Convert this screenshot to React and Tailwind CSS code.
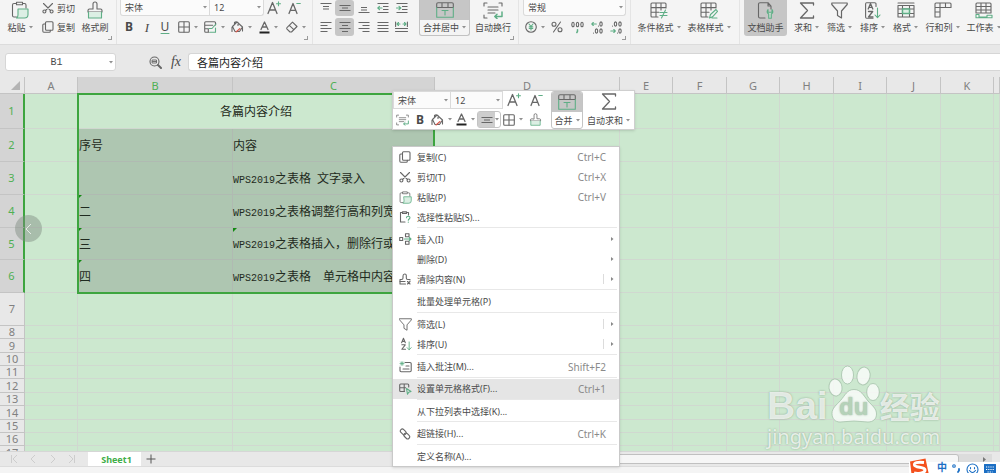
import { useState } from 'react';
import clsx from 'clsx';

const DARK = '#676767';
const GREEN = '#5fae86';

const Svg = ({ w = 16, h = 16, box, children }) => (
  <svg
    width={w}
    height={h}
    viewBox={box || `0 0 ${w} ${h}`}
    fill="none"
    stroke={DARK}
    strokeWidth="1.1"
    strokeLinecap="round"
    strokeLinejoin="round"
    className="shrink-0"
    aria-hidden="true"
  >
    {children}
  </svg>
);

const Caret = () => (
  <svg width="4" height="3" viewBox="0 0 4 3" className="shrink-0" aria-hidden="true">
    <path d="M0 0h4L2 2.6z" fill="#909090" />
  </svg>
);

/* ---------- icons ---------- */

const PasteIcon = ({ size = 18 }) => (
  <Svg w={size} h={size} box="0 0 18 18">
    <path d="M5 2.500H3q-1.500 0-1.500 1.500v10.500q0 1.500 1.500 1.500h2.500M12 2.500h1.500q1.500 0 1.500 1.500v3M5.500 1.200h6v2.600h-6z" />
    <path d="M7 8h10v5.500q0 3.500-3.500 3.500H5.500Q7 16 7 14z" fill="#dcefe4" stroke={GREEN} />
  </Svg>
);

const PasteSpecialIcon = () => (
  <Svg w={12} h={12}>
    <path d="M3 1.500H1.500v9.500H6M8 1.500h1.500V4M3.500.8h4v1.600h-4z" />
    <path d="M7.500 6.800c0-2 3.500-2 3.500 0 0 1.200-1.700 1.200-1.700 2.500M9.300 11v.2" stroke={GREEN} />
  </Svg>
);

const CutIcon = ({ size = 12 }) => (
  <Svg w={size} h={size} box="0 0 12 12">
    <path d="M1.500 1.500l7 7M10.500 1.500l-7 7" />
    <circle cx="2.400" cy="9.500" r="1.500" />
    <circle cx="9.600" cy="9.500" r="1.500" />
  </Svg>
);

const CopyIcon = ({ size = 12 }) => (
  <Svg w={size} h={size} box="0 0 12 12">
    <rect x="3.500" y=".7" width="7.500" height="8.500" rx="1" />
    <path d="M3.500 3H1.800q-1 0-1 1v6q0 1.200 1 1.200h5.500q1 0 1-1V9.200" />
  </Svg>
);

const BrushIcon = ({ w = 18, h = 18 }) => (
  <Svg w={w} h={h} box="0 0 18 18">
    <path d="M7 8V3q0-2 2-2t2 2v5h3.500q1.500 0 1.500 1.500V11H2V9.500Q2 8 3.500 8z" />
    <path d="M2.500 11v6h13v-6" fill="#dcefe4" stroke={GREEN} />
  </Svg>
);

const BordersIcon = () => (
  <Svg w={12} h={12}>
    <rect x=".7" y=".7" width="10.600" height="10.600" rx="1" />
    <path d="M6 1v10M1 6h10" />
  </Svg>
);

const CellStyleIcon = () => (
  <Svg w={13} h={12}>
    <path d="M11.500 4V1.700q0-1-1-1H1.700q-1 0-1 1v8.600q0 1 1 1H5M.7 4.200h8M.7 7.800H4M4.300 7.800V11" />
    <path d="M5 7.500h3l4-4.500M6 11.300h5.500V7" stroke={GREEN} />
  </Svg>
);

const BucketIcon = () => (
  <Svg w={13} h={12}>
    <path d="M6 1L1.500 5.500 4 10.500h4.500L11.500 6zM3.500 3.500V1.500Q5 0 7 1.500v3M1 10.500V6M11.500 6v4" />
    <path d="M5 11l4-3.500" stroke="#d9594c" />
  </Svg>
);

const EraserIcon = () => (
  <Svg w={12} h={12}>
    <path d="M6.500 1.200L11 5.500 5.500 11H4L.8 7.800q-.3-.8.400-1.500zM3.300 4.300l4.500 4.400" />
  </Svg>
);

const FontColorIcon = () => (
  <Svg w={11} h={13}>
    <path d="M2 8.500L5.500 1 9 8.500M3.300 6h4.400" strokeWidth="1.300" />
    <path d="M.5 11.500h10" stroke="#222" strokeWidth="2" strokeLinecap="butt" />
  </Svg>
);

const GrowFontIcon = () => (
  <Svg w={14} h={14}>
    <path d="M1 12.500L5.500 1.500 10 12.500M2.500 9h6" strokeWidth="1.300" />
    <path d="M9.500 2.800h4M11.500.8v4" stroke={GREEN} />
  </Svg>
);

const ShrinkFontIcon = () => (
  <Svg w={13} h={14}>
    <path d="M1 12.500L5 2.500l4 10M2.300 9.300h5.400" strokeWidth="1.300" />
    <path d="M8.800 2.500h3.500" stroke={GREEN} />
  </Svg>
);

const LinesIcon = ({ d }) => (
  <Svg w={12} h={12}>
    <path d={d} strokeLinecap="butt" />
  </Svg>
);

const IndentIcon = ({ right }) => (
  <Svg w={12} h={12}>
    <path d="M.5 1.500h11M6 4.500h5.500M6 7.500h5.500M.5 10.500h11" strokeLinecap="butt" />
    <path d={right ? 'M.5 6h4M3 4.300L4.800 6 3 7.700' : 'M1 6h4M2.500 4.300L.8 6l1.700 1.700'} stroke={GREEN} />
  </Svg>
);

const DistributeIcon = () => (
  <Svg w={13} h={12}>
    <path d="M.6 1v4.500M12.400 1v4.500M.5 7.500h12M.5 10.500h12" />
    <path d="M2 3h3M8 3h3M3.500 1.500L2 3l1.500 1.500M9.500 1.500L11 3 9.500 4.500" stroke={GREEN} />
  </Svg>
);

const MergeIcon = () => (
  <Svg w={18} h={16}>
    <path d="M.7 5.500V2q0-1.300 1.300-1.300h14q1.300 0 1.300 1.300v3.500zM6 1v4.500M12 1v4.500" />
    <path d="M.7 5.500v9.800h16.600V5.500M6 8.500h6M9 8.500v4.500" stroke={GREEN} />
  </Svg>
);

const WrapIcon = ({ w = 20, h = 17 }) => (
  <Svg w={w} h={h} box="0 0 20 17">
    <path d="M1 4V1h3M16 1h3v3M1 13v3h3M5 5h10M5 8h10M5 11h7" />
    <path d="M19 10v4.500h-7M14 12.300l-2.200 2.200L14 16.600" stroke={GREEN} strokeWidth="1.500" />
  </Svg>
);

const YuanIcon = () => (
  <Svg w={12} h={12}>
    <circle cx="6" cy="6" r="5.300" />
    <path d="M4 3l2 2.500L8 3M6 5.500V9M4.200 5.900h3.600M4.200 7.500h3.600" stroke={GREEN} />
  </Svg>
);

const PercentIcon = () => (
  <Svg w={12} h={12}>
    <circle cx="3" cy="3.300" r="2" />
    <circle cx="9" cy="8.800" r="2" />
    <path d="M9.500 1l-7 10" />
  </Svg>
);

const ThousandIcon = () => (
  <Svg w={13} h={13}>
    <ellipse cx="2" cy="3.500" rx="1.200" ry="2.300" />
    <ellipse cx="6.500" cy="3.500" rx="1.200" ry="2.300" />
    <ellipse cx="11" cy="3.500" rx="1.200" ry="2.300" />
    <path d="M6.500 8.800v1.500l-.7 1.200" stroke={GREEN} strokeWidth="1.500" />
  </Svg>
);

const DecimalIcon = ({ less }) => (
  <Svg w={12} h={13}>
    <ellipse cx="10" cy="3" rx="1.200" ry="2.100" />
    <ellipse cx="10" cy="10" rx="1.200" ry="2.100" />
    {less ? <ellipse cx="5.500" cy="3" rx="1.200" ry="2.100" /> : <ellipse cx="5.500" cy="10" rx="1.200" ry="2.100" />}
    <path d={less ? 'M2.500 5v.1M7.500 12v.1' : 'M7.500 5v.1M2.500 12v.1'} />
    <path
      d={less ? 'M.8 10h4.500M3.800 8.500L5.300 10l-1.500 1.500' : 'M.8 3h4.500M2.300 1.500L.8 3l1.500 1.500'}
      stroke={GREEN}
    />
  </Svg>
);

const GridIcon = ({ kind }) => (
  <Svg w={18} h={17}>
    <path d="M16 6V2q0-1-1-1H2Q1 1 1 2v12q0 1 1 1h6M1 5.600h15M1 10.200h8M6 1v14M11 1v7" />
    {kind === 'rule' ? (
      <path d="M10 10.500h7M10 13.500h7M15.500 8l-4 8" stroke={GREEN} />
    ) : (
      <path d="M9.500 16l1-3.500L16 7.500l1.500 1.800-5 5.500zM12 16h5" stroke={GREEN} />
    )}
  </Svg>
);

const AssistantIcon = () => (
  <Svg w={18} h={17}>
    <path d="M8 16H3q-1.500 0-1.500-1.500V2Q1.500.7 3 .7h8L14 4v3M11 1v3h3" />
    <path
      d="M11 7.500q-2 3 .7 4.500v4.300h2.600V12q2.700-1.500.7-4.500v2.700h-4z"
      stroke={GREEN}
      fill="#c6dccf"
    />
  </Svg>
);

const SumIcon = () => (
  <Svg w={16} h={17}>
    <path d="M14.500 3V1H1.500l7 7.500-7 7.500h13v-2" strokeWidth="1.300" />
  </Svg>
);

const FilterIcon = ({ w = 17, h = 17 }) => (
  <Svg w={w} h={h} box="0 0 17 17">
    <path d="M.8 1h15.400v1.500L10.500 9v7l-4-2.500V9L.8 2.500z" strokeWidth="1.200" />
  </Svg>
);

const SortIcon = ({ boxed, w = 16, h = 17 }) => (
  <Svg w={w} h={h} box="0 0 16 17">
    {boxed && <path d="M11 4.500V2q0-1.200-1.200-1.200H1.500Q.6.800.6 2v13q0 1.200 1 1.200H8" />}
    <path d="M3.200 7L5.500 1.500 7.800 7M4 5.300h3M3.500 9.500h4.200L3.500 15h4.500" strokeWidth="1.300" />
    <path d="M12.500 6v9.500M10 13l2.500 2.700L15 13" stroke={GREEN} />
  </Svg>
);

const FormatIcon = () => (
  <Svg w={18} h={16}>
    <path d="M1 1h16M1 3.500h16V15H1zM1 7h16M1 11.500h16M5.500 3.500V15M12.500 3.500V15" />
    <path d="M5.500 7h7v4.500h-7z" fill="#dcefe4" stroke={GREEN} strokeWidth="1.500" />
  </Svg>
);

const RowColIcon = () => (
  <Svg w={18} h={16}>
    <path d="M1 2q0-1 1-1h14q1 0 1 1v3.500H6V15H1zM1 5.500h5V1M11.500 1v4.500M1 10h5" />
  </Svg>
);

const WorksheetIcon = () => (
  <Svg w={18} h={17}>
    <path d="M1 11V2q0-1 1-1h13q1 0 1 1v9zM1 4.500h15M1 8h15M6 1v10M11 1v10" />
    <path d="M1 12.500v3.300h16v-2.600h-5V15H4v-2.500z" stroke={GREEN} />
  </Svg>
);

const InsertIcon = () => (
  <Svg w={13} h={12}>
    <path d="M.7 4.500h3v3h-3zM6.500.7h3.500v3H6.500zM6.500 8.300H10v3H6.500z" />
    <path d="M5.500 6h6.500M10.300 4.500L12 6l-1.700 1.500" stroke={GREEN} />
  </Svg>
);

const ClearIcon = () => (
  <Svg w={12} h={12}>
    <path d="M6.500 11H1V6.500h1.500q1.500 0 1.500-1.500V3q0-2 1.700-2t1.600 2v2q0 1.500 1.500 1.500H11V7" />
    <path d="M8.500 8.500L11 11M11 8.500L8.500 11M1 8.500h5" />
  </Svg>
);

const CommentIcon = () => (
  <Svg w={13} h={12}>
    <path d="M6 1.500h5q1.200 0 1.200 1V9.500q0 1.200-1.200 1.200H2.200Q1 10.700 1 9.500V6M4 8h6M7 5h3" />
    <path d="M1 2.500h4M3 .6v4M1.600 1l2.800 3M4.400 1L1.600 4" stroke={GREEN} strokeWidth=".8" />
  </Svg>
);

const CellFormatIcon = () => (
  <Svg w={13} h={12}>
    <path d="M5.500 8.500H1.700q-1 0-1-1V2q0-1 1-1h7q1 0 1 1v2M.7 4.700h6M5.200 1v7.500" />
    <path d="M7.500 5.500l4.500 3-2.300.7-1.200 2z" stroke={GREEN} />
  </Svg>
);

const LinkIcon = () => (
  <Svg w={12} h={12}>
    <rect x="1" y="1.800" width="6.500" height="4" rx="2" transform="rotate(45 4.200 3.800)" />
    <rect x="4.500" y="6" width="6.500" height="4" rx="2" transform="rotate(45 7.800 8)" />
  </Svg>
);

const TOP = 'M.5 1.500h11M3 4.500h6M3 7h6';
const MIDDLE = 'M.5 3.500h11M3 6h6M.5 8.500h11';
const BOTTOM = 'M3 5.500h6M3 8h6M.5 10.500h11';
const LEFT = 'M.5 1.500h11M.5 4.500h7M.5 7.500h11M.5 10.500h7';
const CENTER = 'M.5 1.500h11M3 4.500h6M.5 7.500h11M3 10.500h6';
const RIGHT = 'M.5 1.500h11M4.500 4.500h7M.5 7.500h11M4.500 10.500h7';
const JUSTIFY = 'M.5 1.500h11M.5 4.500h11M.5 7.500h11M.5 10.500h11';

/* ---------- ribbon ---------- */

const Group = ({ className, launcher, children }) => (
  <section className={clsx('relative flex shrink-0 border-r border-[#e4e4e4]', className)}>
    {children}
    {launcher && (
      <button aria-label="更多设置" className="absolute right-1 bottom-1 size-1 border-r border-b border-[#9a9a9a]" />
    )}
  </section>
);

const BigButton = ({ icon, label, caret, active, className }) => (
  <button
    className={clsx('flex h-9 shrink-0 flex-col items-center', active && 'rounded-b-[3px] bg-[#c6c6c6]', className)}
  >
    <span className="flex h-5 items-center">{icon}</span>
    <span className="flex h-[14px] items-center gap-[3px] whitespace-nowrap">
      {label}
      {caret && <Caret />}
    </span>
  </button>
);

const Tool = ({ label, active, caret, className, children }) => (
  <button
    aria-label={label}
    className={clsx(
      'flex h-full shrink-0 items-center justify-center',
      active && 'rounded-[3px] bg-[#c6c6c6]',
      caret && 'gap-1',
      className
    )}
  >
    {children}
    {caret && <Caret />}
  </button>
);

const Picker = ({ label, value, className }) => (
  <label className={clsx('relative flex shrink-0 items-center border border-[#dadada] bg-[#fbfbfb]', className)}>
    <select aria-label={label} defaultValue={value} className="h-full w-full appearance-none pl-1 outline-none">
      <option>{value}</option>
    </select>
    <span className="pointer-events-none absolute right-0.5 flex">
      <Caret />
    </span>
  </label>
);

const Ribbon = () => (
  <header className="flex h-[45px] shrink-0 overflow-hidden border-b border-[#dcdcdc] bg-[#f4f4f4]">
    <Group launcher className="w-[117px] pl-1">
      <BigButton className="w-8" icon={<PasteIcon />} label="粘贴" caret />
      <div className="ml-1.5 flex w-9 flex-col gap-0.5">
        <button className="flex h-4 items-center gap-[3px]">
          <CutIcon />
          剪切
        </button>
        <button className="flex h-[18px] items-center gap-[3px]">
          <CopyIcon />
          复制
        </button>
      </div>
      <BigButton className="w-[34px]" icon={<BrushIcon />} label="格式刷" />
    </Group>

    <Group launcher className="w-[196px] flex-col gap-0.5 pl-[3px]">
      <div className="flex h-4">
        <Picker label="字体" value="宋体" className="w-[90px] rounded-bl-[3px] border-t-0" />
        <Picker label="字号" value="12" className="w-[54px] rounded-br-[3px] border-t-0 border-l-0" />
        <Tool label="增大字号" className="w-5">
          <GrowFontIcon />
        </Tool>
        <Tool label="减小字号" className="w-5">
          <ShrinkFontIcon />
        </Tool>
      </div>
      <div className="flex h-[18px]">
        <Tool className="w-[18px] text-[12px] font-bold">B</Tool>
        <Tool className="w-[18px] font-['Liberation_Serif',serif] text-[13px] italic">I</Tool>
        <Tool className="w-[18px] text-[12px] underline decoration-[#5fae86] underline-offset-2">U</Tool>
        <Tool label="边框" caret className="w-[27px]">
          <BordersIcon />
        </Tool>
        <Tool label="单元格样式" caret className="w-[27px]">
          <CellStyleIcon />
        </Tool>
        <Tool label="填充颜色" caret className="w-[27px]">
          <BucketIcon />
        </Tool>
        <Tool label="字体颜色" caret className="w-[27px]">
          <FontColorIcon />
        </Tool>
        <Tool label="清除" caret className="w-[27px]">
          <EraserIcon />
        </Tool>
      </div>
    </Group>

    <Group launcher className="w-[206px] pl-[3px]">
      <div className="flex flex-col gap-0.5">
        <div className="flex h-4">
          <Tool label="顶端对齐" className="w-[19px]">
            <LinesIcon d={TOP} />
          </Tool>
          <Tool label="垂直居中" active className="w-[19px]">
            <LinesIcon d={MIDDLE} />
          </Tool>
          <Tool label="底端对齐" className="w-[19px]">
            <LinesIcon d={BOTTOM} />
          </Tool>
          <Tool label="减少缩进" className="w-[19px]">
            <IndentIcon />
          </Tool>
          <Tool label="增加缩进" className="w-[19px]">
            <IndentIcon right />
          </Tool>
        </div>
        <div className="flex h-[18px]">
          <Tool label="左对齐" className="w-[19px]">
            <LinesIcon d={LEFT} />
          </Tool>
          <Tool label="水平居中" active className="w-[19px]">
            <LinesIcon d={CENTER} />
          </Tool>
          <Tool label="右对齐" className="w-[19px]">
            <LinesIcon d={RIGHT} />
          </Tool>
          <Tool label="两端对齐" className="w-[19px]">
            <LinesIcon d={JUSTIFY} />
          </Tool>
          <Tool label="分散对齐" className="w-[19px]">
            <DistributeIcon />
          </Tool>
        </div>
      </div>
      <button className="ml-2 flex h-9 w-[51px] flex-col overflow-hidden rounded-b-[3px] border border-t-0 border-[#c2c2c2]">
        <span className="flex h-5 w-full items-center justify-center bg-[#c6c6c6]">
          <MergeIcon />
        </span>
        <span className="flex h-[14px] w-full items-center justify-center gap-[3px] whitespace-nowrap">
          合并居中
          <Caret />
        </span>
      </button>
      <BigButton className="w-[46px]" icon={<WrapIcon />} label="自动换行" />
    </Group>

    <Group launcher className="w-28 flex-col gap-0.5 pl-1">
      <div className="flex h-4">
        <Picker label="数字格式" value="常规" className="w-[103px] rounded-b-[3px] border-t-0" />
      </div>
      <div className="flex h-[18px]">
        <Tool label="货币" caret className="w-6">
          <YuanIcon />
        </Tool>
        <Tool label="百分比" className="w-5">
          <PercentIcon />
        </Tool>
        <Tool label="千位分隔" className="w-5">
          <ThousandIcon />
        </Tool>
        <Tool label="增加小数位" className="w-[19px]">
          <DecimalIcon />
        </Tool>
        <Tool label="减少小数位" className="w-[19px]">
          <DecimalIcon less />
        </Tool>
      </div>
    </Group>

    <Group className="w-[109px] pl-[3px]">
      <BigButton className="w-[50px]" icon={<GridIcon kind="rule" />} label="条件格式" caret />
      <BigButton className="w-[50px]" icon={<GridIcon kind="style" />} label="表格样式" caret />
    </Group>

    <Group className="border-r-0 pl-1">
      <BigButton className="w-[43px]" icon={<AssistantIcon />} label="文档助手" active />
      <BigButton className="ml-[3px] w-[33px]" icon={<SumIcon />} label="求和" caret />
      <BigButton className="w-[33px]" icon={<FilterIcon />} label="筛选" caret />
      <BigButton className="w-[33px]" icon={<SortIcon boxed />} label="排序" caret />
      <BigButton className="w-[33px]" icon={<FormatIcon />} label="格式" caret />
      <BigButton className="w-[41px]" icon={<RowColIcon />} label="行和列" caret />
      <BigButton className="w-[41px]" icon={<WorksheetIcon />} label="工作表" caret />
    </Group>
  </header>
);

const FormulaBar = () => (
  <div className="flex shrink-0 items-center bg-[#e8e8e8] pt-2 pb-1.5 pl-[5px]">
    <label className="relative flex h-[18px] w-[111px] items-center rounded-[3px] border border-[#d6d6d6] bg-white">
      <input
        aria-label="名称框"
        defaultValue="B1"
        className="w-full bg-transparent pr-2 text-center font-['Liberation_Mono',monospace] text-[10px] outline-none"
      />
      <span className="pointer-events-none absolute right-0.5 flex">
        <Caret />
      </span>
    </label>
    <button aria-label="浏览公式结果" className="ml-[33px]">
      <Svg w={13} h={13}>
        <circle cx="5.500" cy="5.500" r="4.500" />
        <path d="M3.500 4h4v3h-4zM3.500 5.500h4" strokeWidth=".9" />
        <path d="M9 9l3 3" strokeWidth="2" />
      </Svg>
    </button>
    <button className="ml-[6px] w-4 font-['Liberation_Serif',serif] text-[14px] leading-none italic">fx</button>
    <input
      aria-label="编辑栏"
      defaultValue="各篇内容介绍"
      className="ml-1 h-[18px] min-w-0 flex-1 rounded-l-[3px] border border-r-0 border-[#d6d6d6] bg-white pl-2 text-[11px] text-[#222] outline-none"
    />
  </div>
);

/* ---------- sheet ---------- */

const columns = [
  { name: 'A', width: 'w-[53px]' },
  { name: 'B', width: 'w-[155px]', selected: true },
  { name: 'C', width: 'w-[202px]', selected: true },
  { name: 'D', width: 'w-[185px]' },
  { name: 'E', width: 'w-[53px]' },
  { name: 'F', width: 'w-[54px]' },
  { name: 'G', width: 'w-[53px]' },
  { name: 'H', width: 'w-[54px]' },
  { name: 'I', width: 'w-[53px]' },
  { name: 'J', width: 'w-[54px]' },
  { name: 'K', width: 'w-[53px]' },
  { name: '', width: 'w-auto' },
];

const rows = [
  { height: 'h-[35px]', title: '各篇内容介绍' },
  { height: 'h-[33px]', b: '序号', c: '内容' },
  { height: 'h-[33px]', b: '', code: 'WPS2019', c: '之表格', rest: '文字录入', gap: 'ml-1.5' },
  { height: 'h-[33px]', b: '二', code: 'WPS2019', c: '之表格调整行高和列宽', flagB: true },
  { height: 'h-[32px]', b: '三', code: 'WPS2019', c: '之表格插入，删除行或', flagB: true, flagC: true },
  { height: 'h-[33px]', b: '四', code: 'WPS2019', c: '之表格', rest: '单元格中内容', gap: 'ml-3', flagB: true },
  { height: 'h-[33px]' },
  { height: 'h-[13px]' },
  { height: 'h-[14px]' },
  { height: 'h-[13px]' },
  { height: 'h-[13px]' },
  { height: 'h-[14px]' },
  { height: 'h-[13px]' },
  { height: 'h-[14px]' },
  { height: 'h-[13px]' },
  { height: 'h-[13px]' },
  { height: 'h-[14px]' },
];

const CELL = 'border-r border-b border-[#d0d8d0] p-0';
const SELECTED = 'relative border-r border-b border-[#b0bab2] bg-[#aec6b1] px-0 pt-0.5 pb-0 whitespace-nowrap';

const ErrorFlag = () => (
  <span className="absolute top-0 left-0 size-0 border-t-4 border-r-4 border-t-[#128a12] border-r-transparent" />
);

const Sheet = () => (
  <main className="relative min-h-0 flex-1 overflow-hidden bg-[#cce8cf]">
    <table className="w-full table-fixed border-separate border-spacing-0 text-[12px] leading-none text-[#1f2a20]">
      <colgroup>
        <col className="w-[25px]" />
        {columns.map((col) => (
          <col key={col.name} className={col.width} />
        ))}
      </colgroup>
      <thead className="font-['Noto_Sans',sans-serif] text-[11px] text-[#808080]">
        <tr className="h-[17px]">
          <th className="border-r border-b border-[#c4c4c4] bg-[#e8e8e8] p-0">
            <svg width="9" height="9" viewBox="0 0 9 9" className="ml-auto mr-1" aria-hidden="true">
              <path d="M9 0v9H0z" fill="#b4b4b4" />
            </svg>
          </th>
          {columns.map((col) => (
            <th
              key={col.name}
              className={clsx(
                'border-r border-b border-[#c4c4c4] p-0 font-normal',
                col.selected ? 'bg-[#d4d4d4] text-[#4fb053]' : 'bg-[#e8e8e8]'
              )}
            >
              {col.name}
            </th>
          ))}
        </tr>
      </thead>
      <tbody>
        {rows.map((row, i) => {
          const selected = i < 6;
          return (
            <tr key={i} className={row.height}>
              <th
                className={clsx(
                  "border-b p-0 font-['Noto_Sans',sans-serif] text-[11px] leading-[12px] font-normal",
                  selected
                    ? 'border-r-2 border-r-[#3da53f] border-b-[#c4c4c4] bg-[#d4d4d4] text-[#4fb053]'
                    : 'border-r border-[#c4c4c4] bg-[#e8e8e8] text-[#808080]'
                )}
              >
                {i + 1}
              </th>
              <td className={CELL} />
              {row.title && (
                <td colSpan={2} className="border-r border-b border-[#d0d8d0] px-0 pt-0.5 pb-0 text-center">
                  {row.title}
                </td>
              )}
              {selected && !row.title && (
                <>
                  <td className={clsx(SELECTED, 'pl-px')}>
                    {row.flagB && <ErrorFlag />}
                    {row.b}
                  </td>
                  <td className={SELECTED}>
                    {row.flagC && <ErrorFlag />}
                    <span className="font-['Liberation_Mono',monospace] text-[10px]">{row.code}</span>
                    {row.c}
                    {row.rest && <span className={row.gap}>{row.rest}</span>}
                  </td>
                </>
              )}
              {!selected && (
                <>
                  <td className={CELL} />
                  <td className={CELL} />
                </>
              )}
              {columns.slice(3).map((col) => (
                <td key={col.name} className={CELL} />
              ))}
            </tr>
          );
        })}
      </tbody>
    </table>

    {/* Selection frame over B1:C6 */}
    <div className="pointer-events-none absolute top-4 left-[77px] h-[201px] w-[358px] border-2 border-[#3da53f]" />

    <button
      aria-label="上一页"
      className="absolute top-[138px] left-[15px] flex size-[27px] items-center justify-center rounded-full bg-[#7d8a7f]/45"
    >
      <svg width="7" height="12" viewBox="0 0 7 12" fill="none" stroke="#e6ece6" aria-hidden="true">
        <path d="M6 1L1 6l5 5" />
      </svg>
    </button>
  </main>
);

const SheetTabs = () => (
  <nav className="flex h-[15px] shrink-0 items-stretch border-t border-[#d6d6d6] bg-[#e8e8e8]">
    <div className="flex w-[88px] items-center justify-around pr-1.5 pl-1">
      {['M1.500 1v8M7 1L3 5l4 4', 'M6 1L2 5l4 4', 'M2 1l4 4-4 4', 'M6.500 1v8M1 1l4 4-4 4'].map((d) => (
        <button key={d} aria-label="切换工作表">
          <svg width="8" height="10" viewBox="0 0 8 10" fill="none" stroke="#cdcdcd" aria-hidden="true">
            <path d={d} />
          </svg>
        </button>
      ))}
    </div>
    <button className="flex w-[53px] items-center justify-center bg-white pl-1 font-['Noto_Sans',sans-serif] text-[9px] leading-none font-bold text-[#3fae49]">
      Sheet1
    </button>
    <button aria-label="新建工作表" className="ml-[5px] flex items-center">
      <svg width="10" height="10" viewBox="0 0 10 10" stroke="#555" aria-hidden="true">
        <path d="M5 .5v9M.5 5h9" />
      </svg>
    </button>
    <div className="my-0.5 mr-2 ml-auto flex w-[58%] items-center justify-end bg-[#dcdcdc]">
      <div className="h-full flex-1 rounded-r-[3px] border border-[#c0c0c0] bg-[#f6f6f6]" />
      <button aria-label="向右滚动" className="flex w-[33px] justify-end pr-1.5">
        <svg width="3" height="5" viewBox="0 0 3 5" aria-hidden="true">
          <path d="M0 0l3 2.500L0 5z" fill="#777" />
        </svg>
      </button>
    </div>
  </nav>
);

/* ---------- floating parts ---------- */

const MiniToolbar = () => (
  <div className="absolute top-[90px] left-[392px] flex h-10 border border-[#cfcfcf] bg-white shadow-sm">
    <div className="flex w-[156px] flex-col">
      <div className="flex h-[18px]">
        <Picker label="字体" value="宋体" className="w-[58px]" />
        <Picker label="字号" value="12" className="w-[52px] border-l-0" />
        <Tool label="增大字号" className="w-[22px]">
          <GrowFontIcon />
        </Tool>
        <Tool label="减小字号" className="w-[22px]">
          <ShrinkFontIcon />
        </Tool>
      </div>
      <div className="mt-0.5 flex h-[17px]">
        <Tool label="自动换行" className="w-[18px]">
          <WrapIcon w={13} h={12} />
        </Tool>
        <Tool className="w-[18px] text-[12px] font-bold">B</Tool>
        <Tool label="填充颜色" caret className="w-6">
          <BucketIcon />
        </Tool>
        <Tool label="字体颜色" caret className="w-6">
          <FontColorIcon />
        </Tool>
        <button aria-label="对齐方式" className="flex w-6 items-center rounded-[3px] border border-[#c4c4c4]">
          <span className="flex h-full w-[17px] items-center justify-center bg-[#cdcdcd]">
            <LinesIcon d={MIDDLE} />
          </span>
          <Caret />
        </button>
        <Tool label="边框" caret className="w-6">
          <BordersIcon />
        </Tool>
        <Tool label="格式刷" className="w-5">
          <BrushIcon w={13} h={13} />
        </Tool>
      </div>
    </div>
    <button className="ml-0.5 flex w-8 flex-col items-center overflow-hidden rounded-[3px] border border-[#c4c4c4]">
      <span className="flex h-5 w-full items-center justify-center bg-[#c6c6c6]">
        <MergeIcon />
      </span>
      <span className="flex flex-1 items-center gap-[3px] whitespace-nowrap">
        合并
        <Caret />
      </span>
    </button>
    <button className="flex w-[51px] flex-col items-center">
      <span className="flex h-[21px] items-center">
        <SumIcon />
      </span>
      <span className="flex flex-1 items-center gap-[3px] whitespace-nowrap">
        自动求和
        <Caret />
      </span>
    </button>
  </div>
);

const menu = [
  { icon: <CopyIcon />, label: '复制(C)', keys: 'Ctrl+C' },
  { icon: <CutIcon />, label: '剪切(T)', keys: 'Ctrl+X' },
  { icon: <PasteIcon size={13} />, label: '粘贴(P)', keys: 'Ctrl+V' },
  { icon: <PasteSpecialIcon />, label: '选择性粘贴(S)...' },
  null,
  { icon: <InsertIcon />, label: '插入(I)', sub: true },
  { label: '删除(D)', sub: true },
  { icon: <ClearIcon />, label: '清除内容(N)', sub: true, split: true },
  null,
  { label: '批量处理单元格(P)' },
  null,
  { icon: <FilterIcon w={13} h={13} />, label: '筛选(L)', sub: true, split: true },
  { icon: <SortIcon w={13} h={14} />, label: '排序(U)', sub: true, split: true },
  null,
  { icon: <CommentIcon />, label: '插入批注(M)...', keys: 'Shift+F2' },
  null,
  { icon: <CellFormatIcon />, label: '设置单元格格式(F)...', keys: 'Ctrl+1' },
  null,
  { label: '从下拉列表中选择(K)...' },
  null,
  { icon: <LinkIcon />, label: '超链接(H)...', keys: 'Ctrl+K' },
  null,
  { label: '定义名称(A)...' },
];

const ContextMenu = () => {
  const [active, setActive] = useState('设置单元格格式(F)...');

  return (
    <div
      role="menu"
      className="absolute top-[146px] bottom-1.5 left-[392px] flex w-[228px] flex-col border border-[#c9c9c9] bg-white shadow-sm"
    >
      {menu.map((item, i) =>
        item ? (
          <button
            key={item.label}
            role="menuitem"
            onMouseEnter={() => setActive(item.label)}
            className={clsx('flex h-5 shrink-0 items-center pr-[5px] text-left', active === item.label && 'bg-[#e5e5e5]')}
          >
            <span className="flex w-6 shrink-0 items-center justify-center">{item.icon}</span>
            <span className="flex-1 whitespace-nowrap">{item.label}</span>
            {item.keys && <span className="pr-2 text-[10px] text-[#8a8a8a]">{item.keys}</span>}
            {item.split && <span className="mr-[7px] h-2.5 border-l border-[#dcdcdc]" />}
            {item.sub && (
              <svg width="3" height="4" viewBox="0 0 3 4" aria-hidden="true">
                <path d="M0 0l2.500 2L0 4z" fill="#888" />
              </svg>
            )}
          </button>
        ) : (
          <div key={i} role="separator" className="mr-0.5 ml-6 flex-1 border-t border-[#e8e8e8]" />
        )
      )}
    </div>
  );
};

const Watermark = () => (
  <div className="pointer-events-none absolute right-14 bottom-[22px] w-[177px] text-white/75 [text-shadow:0_0_2px_rgba(90,125,95,0.6)]">
    <div className="flex h-[57px] items-end leading-none">
      <span className="font-['Liberation_Sans',sans-serif] text-[39px] leading-[34px] font-bold">Bai</span>
      <span className="relative flex w-[52px] shrink-0 justify-center">
        <svg
          width="52"
          height="58"
          viewBox="0 0 52 58"
          fill="#fff"
          fillOpacity=".75"
          stroke="#9dbba2"
          strokeOpacity=".7"
          aria-hidden="true"
        >
          <ellipse cx="7.500" cy="22.500" rx="6.500" ry="8.500" transform="rotate(-8 7.500 22.500)" />
          <ellipse cx="19.500" cy="10" rx="6" ry="9" />
          <ellipse cx="35.500" cy="11" rx="6.500" ry="9" transform="rotate(10 35.500 11)" />
          <ellipse cx="45" cy="27" rx="6.300" ry="8.500" />
          <path d="M26 24.500c7 0 9.500 6 14 11.500 4 4.500 8.500 7.500 8.500 13 0 5-3.500 8-8.500 8-5 0-9-1-14-1s-9 1-14 1c-5 0-8-3.500-8-8.500 0-5.500 4.500-8.500 8.500-13C17 30.500 19 24.500 26 24.500z" />
        </svg>
        <span className="absolute bottom-1 font-['Liberation_Sans',sans-serif] text-[24px] leading-[24px] font-bold text-[#b5d2b9]">
          du
        </span>
      </span>
      <span className="text-[30px] leading-[32px] font-bold whitespace-nowrap">经验</span>
    </div>
    <div className="font-['Noto_Sans',sans-serif] text-[20px] leading-[28px] whitespace-nowrap">jingyan.baidu.com</div>
  </div>
);

const InputMethodBar = () => (
  <div className="absolute right-0 bottom-0 flex h-[11px] items-start gap-[5px] bg-white pr-1 pl-7 text-[#1c6fc4]">
    <span className="absolute bottom-0 left-0 flex h-[15px] w-5 overflow-hidden">
      <svg width="21" height="20" viewBox="0 0 21 20" className="shrink-0" aria-hidden="true">
        <path d="M1 3.500L16.500.5 20 17 3 20z" fill="#f4511e" />
        <path
          d="M15 4.500Q5 3.500 5.500 7c.5 3 10.500 1.500 10.500 5 0 3.500-8 4-11 3"
          fill="none"
          stroke="#fff"
          strokeWidth="3"
        />
      </svg>
    </span>
    <span className="text-[10px] leading-[11px] font-bold">中</span>
    <Svg w={9} h={11}>
      <circle cx="2" cy="4" r="1.300" stroke="#1c6fc4" />
      <path d="M7 7v1.500L6 10" stroke="#1c6fc4" strokeWidth="1.800" />
    </Svg>
    <Svg w={13} h={11}>
      <circle cx="6.500" cy="7.500" r="5.500" stroke="#1c6fc4" />
      <path d="M4.500 5.500v1.300M8.500 5.500v1.300M3.500 8.500q3 4 6 0" stroke="#1c6fc4" />
    </Svg>
    <Svg w={12} h={11}>
      <path d="M.5 2.500h11v10H.5z" fill="#1c6fc4" stroke="#1c6fc4" />
      <path d="M2 5h8M2 7.500h8M3.500 10h5" stroke="#fff" strokeDasharray="1.200 1" strokeLinecap="butt" />
    </Svg>
  </div>
);

const App = () => (
  <div
    lang="zh-CN"
    className="relative flex h-screen flex-col overflow-hidden bg-[#f4f4f4] font-['Noto_Sans','Noto_Sans_CJK_SC',sans-serif] text-[9px] leading-none text-[#4a4a4a]"
  >
    <Ribbon />
    <FormulaBar />
    <Sheet />
    <SheetTabs />
    <footer className="h-[7px] shrink-0 border-t border-[#dcdcdc] bg-[#f4f4f4]" />
    <Watermark />
    <MiniToolbar />
    <ContextMenu />
    <InputMethodBar />
  </div>
);

export default App;
